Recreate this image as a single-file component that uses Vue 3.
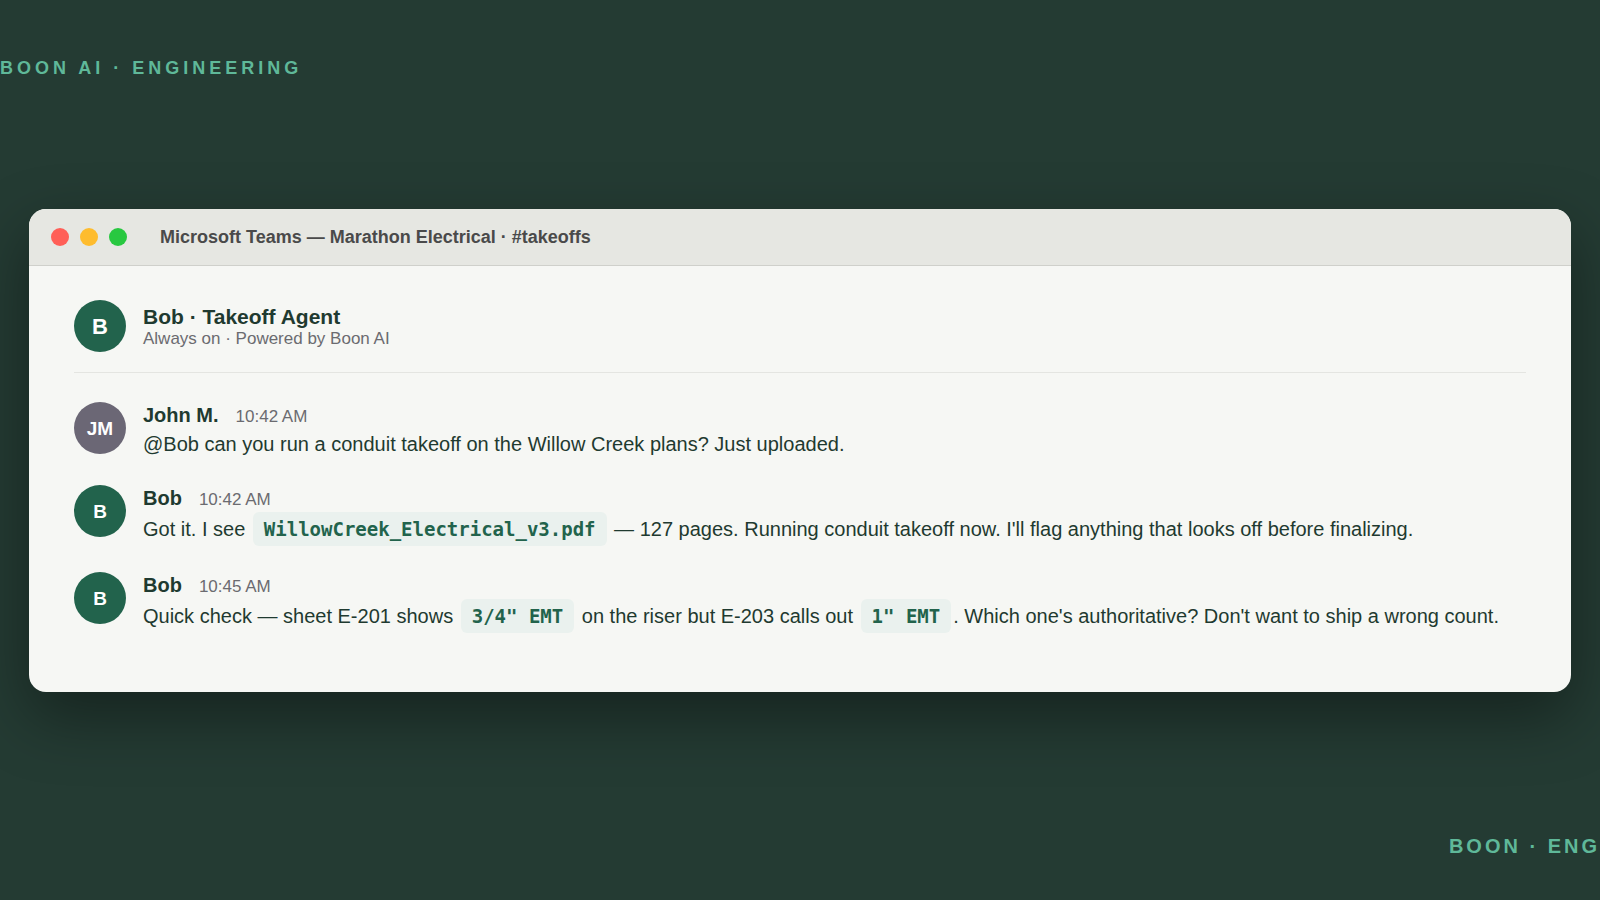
<script setup>
const messages = [
  {
    id: 1,
    author: 'John M.',
    initials: 'JM',
    time: '10:42 AM',
    human: true,
    parts: [{ text: '@Bob can you run a conduit takeoff on the Willow Creek plans? Just uploaded.' }],
  },
  {
    id: 2,
    author: 'Bob',
    initials: 'B',
    time: '10:42 AM',
    parts: [
      { text: 'Got it. I see ' },
      { text: 'WillowCreek_Electrical_v3.pdf', code: true },
      { text: " — 127 pages. Running conduit takeoff now. I'll flag anything that looks off before finalizing." },
    ],
  },
  {
    id: 3,
    author: 'Bob',
    initials: 'B',
    time: '10:45 AM',
    parts: [
      { text: 'Quick check — sheet E-201 shows ' },
      { text: '3/4" EMT', code: true },
      { text: ' on the riser but E-203 calls out ' },
      { text: '1" EMT', code: true },
      { text: ". Which one's authoritative? Don't want to ship a wrong count." },
    ],
  },
]
</script>

<template>
  <div class="stage">
    <header class="brand-top">BOON AI · ENGINEERING</header>

    <main class="window">
      <div class="titlebar">
        <div class="lights" aria-hidden="true">
          <span class="light close"></span>
          <span class="light minimise"></span>
          <span class="light zoom"></span>
        </div>
        <h1 class="title">Microsoft Teams — Marathon Electrical · #takeoffs</h1>
      </div>

      <div class="body">
        <section class="agent">
          <div class="avatar large">B</div>
          <div class="agent-info">
            <h2 class="agent-name">Bob · Takeoff Agent</h2>
            <p class="agent-status">Always on · Powered by Boon AI</p>
          </div>
        </section>

        <article v-for="m in messages" :key="m.id" class="message">
          <div class="avatar" :class="{ human: m.human }">{{ m.initials }}</div>
          <div class="content">
            <div class="meta">
              <span class="author">{{ m.author }}</span>
              <time class="time">{{ m.time }}</time>
            </div>
            <p class="text"><template v-for="(p, i) in m.parts" :key="i"><code v-if="p.code" class="code">{{ p.text }}</code><template v-else>{{ p.text }}</template></template></p>
          </div>
        </article>
      </div>
    </main>

    <footer class="brand-bottom">BOON · ENG</footer>
  </div>
</template>

<style>
body {
  margin: 0;
  background: #243b33;
}
</style>

<style scoped>
.stage {
  box-sizing: border-box;
  min-height: 100vh;
  display: grid;
  grid-template-rows: 1fr auto 1fr;
  background: #243b33;
  font-family: "Liberation Sans", Arial, sans-serif;
  color: #1f3a30;
  overflow: hidden;
}

.brand-top,
.brand-bottom {
  color: #5fb899;
  font-weight: 700;
  line-height: 24px;
}

.brand-top {
  padding-top: 56px;
  font-size: 18px;
  letter-spacing: 4px;
}

.brand-bottom {
  align-self: end;
  justify-self: end;
  padding-bottom: 42px;
  font-size: 20px;
  letter-spacing: 3px;
}

.window {
  margin: 0 29px;
  border-radius: 17px;
  background: #f6f7f4;
  box-shadow: 0 24px 64px rgba(0, 0, 0, 0.4);
  overflow: hidden;
}

.titlebar {
  box-sizing: border-box;
  display: flex;
  align-items: center;
  gap: 33px;
  height: 57px;
  padding: 0 22px;
  background: #e6e7e2;
  border-bottom: 1px solid #cfd0cb;
}

.lights {
  display: flex;
  gap: 11px;
}

.light {
  width: 18px;
  height: 18px;
  border-radius: 50%;
}

.close { background: #ff5f57; }
.minimise { background: #febc2e; }
.zoom { background: #28c840; }

.title {
  margin: 0;
  padding-top: 2px;
  font-size: 18px;
  font-weight: 700;
  color: #4a4a4a;
}

.body {
  padding: 34px 45px 60px;
}

.agent {
  display: flex;
  align-items: center;
  gap: 17px;
  padding-bottom: 20px;
  margin-bottom: 29px;
  border-bottom: 1px solid #e4e5e1;
}

.agent-info { padding-top: 2px; }

.agent-name {
  margin: 0;
  font-size: 21px;
  line-height: 24px;
}

.agent-status {
  margin: 0;
  font-size: 17px;
  line-height: 19px;
  color: #6b6b70;
}

.avatar {
  box-sizing: border-box;
  flex: none;
  display: flex;
  align-items: center;
  justify-content: center;
  width: 52px;
  height: 52px;
  padding-top: 2px;
  border-radius: 50%;
  background: #22634c;
  color: #fff;
  font-size: 19px;
  font-weight: 700;
}

.avatar.large { font-size: 22px; }
.avatar.human { background: #6b6775; }

.message {
  display: flex;
  align-items: flex-start;
  gap: 17px;
}

.message + .message { margin-top: 27px; }

.content { min-width: 0; }

.meta {
  display: flex;
  align-items: baseline;
  gap: 17px;
  line-height: 26px;
}

.author {
  font-size: 20px;
  font-weight: 700;
}

.time {
  font-size: 17px;
  color: #6b6b70;
}

.text {
  margin: 0;
  font-size: 20px;
  line-height: 28px;
}

.code {
  display: inline-block;
  margin: -1px 2px;
  padding: 6px 11px;
  border-radius: 6px;
  background: #eaf1ee;
  color: #22634c;
  font-family: "DejaVu Sans Mono", monospace;
  font-size: 19px;
  font-weight: 700;
  line-height: 22px;
}
</style>
